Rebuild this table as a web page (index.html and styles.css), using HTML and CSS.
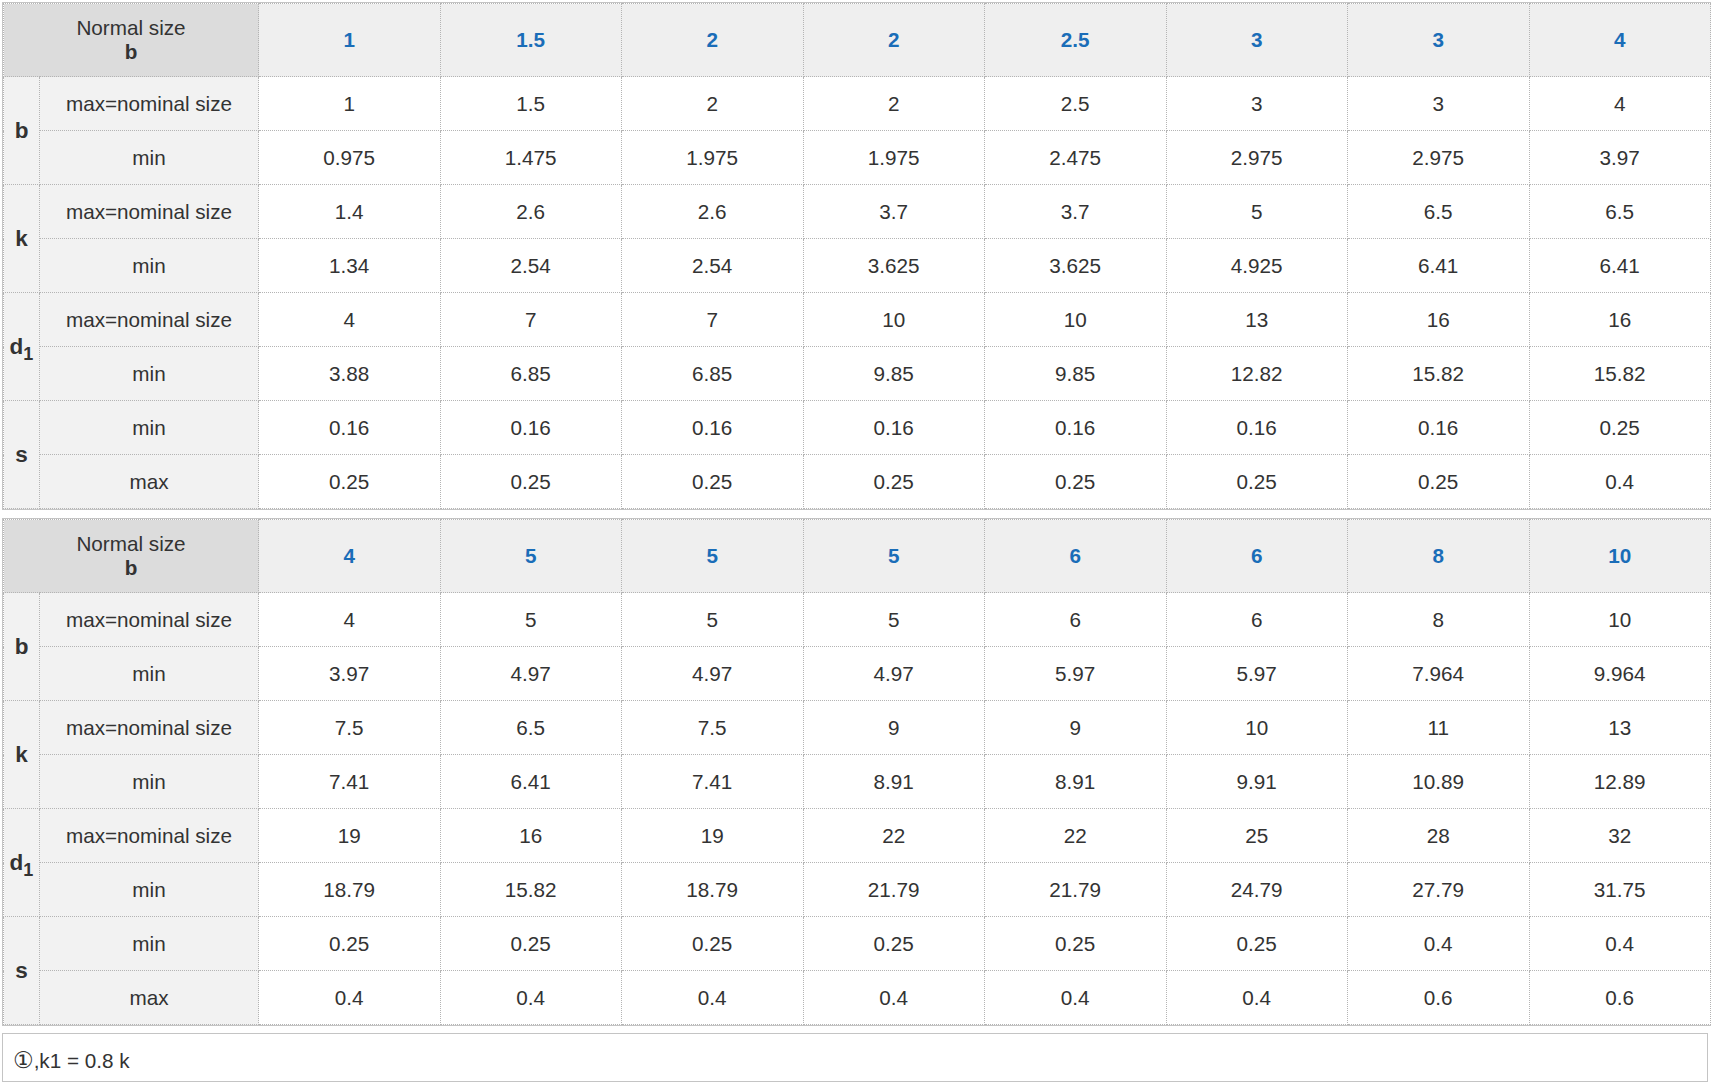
FILE: index.html
```html
<!DOCTYPE html>
<html>
<head>
<meta charset="utf-8">
<link rel="stylesheet" href="styles.css">
</head>
<body>
<div class="page">
  <div class="tbl-wrap">
    <table class="spec">
      <colgroup>
        <col class="c-sym"><col class="c-lbl">
        <col class="c-d"><col class="c-d"><col class="c-d"><col class="c-d"><col class="c-d"><col class="c-d"><col class="c-d"><col class="c-d">
      </colgroup>
      <tr class="hrow">
        <th colspan="2" class="corner">Normal size<br><b>b</b></th>
        <th>1</th><th>1.5</th><th>2</th><th>2</th><th>2.5</th><th>3</th><th>3</th><th>4</th>
      </tr>
      <tr><td rowspan="2" class="sym">b</td><td class="lbl">max=nominal size</td><td>1</td><td>1.5</td><td>2</td><td>2</td><td>2.5</td><td>3</td><td>3</td><td>4</td></tr>
      <tr><td class="lbl">min</td><td>0.975</td><td>1.475</td><td>1.975</td><td>1.975</td><td>2.475</td><td>2.975</td><td>2.975</td><td>3.97</td></tr>
      <tr><td rowspan="2" class="sym">k</td><td class="lbl">max=nominal size</td><td>1.4</td><td>2.6</td><td>2.6</td><td>3.7</td><td>3.7</td><td>5</td><td>6.5</td><td>6.5</td></tr>
      <tr><td class="lbl">min</td><td>1.34</td><td>2.54</td><td>2.54</td><td>3.625</td><td>3.625</td><td>4.925</td><td>6.41</td><td>6.41</td></tr>
      <tr><td rowspan="2" class="sym">d<sub>1</sub></td><td class="lbl">max=nominal size</td><td>4</td><td>7</td><td>7</td><td>10</td><td>10</td><td>13</td><td>16</td><td>16</td></tr>
      <tr><td class="lbl">min</td><td>3.88</td><td>6.85</td><td>6.85</td><td>9.85</td><td>9.85</td><td>12.82</td><td>15.82</td><td>15.82</td></tr>
      <tr><td rowspan="2" class="sym">s</td><td class="lbl">min</td><td>0.16</td><td>0.16</td><td>0.16</td><td>0.16</td><td>0.16</td><td>0.16</td><td>0.16</td><td>0.25</td></tr>
      <tr><td class="lbl">max</td><td>0.25</td><td>0.25</td><td>0.25</td><td>0.25</td><td>0.25</td><td>0.25</td><td>0.25</td><td>0.4</td></tr>
    </table>
  </div>

  <div class="tbl-wrap second">
    <table class="spec">
      <colgroup>
        <col class="c-sym"><col class="c-lbl">
        <col class="c-d"><col class="c-d"><col class="c-d"><col class="c-d"><col class="c-d"><col class="c-d"><col class="c-d"><col class="c-d">
      </colgroup>
      <tr class="hrow">
        <th colspan="2" class="corner">Normal size<br><b>b</b></th>
        <th>4</th><th>5</th><th>5</th><th>5</th><th>6</th><th>6</th><th>8</th><th>10</th>
      </tr>
      <tr><td rowspan="2" class="sym">b</td><td class="lbl">max=nominal size</td><td>4</td><td>5</td><td>5</td><td>5</td><td>6</td><td>6</td><td>8</td><td>10</td></tr>
      <tr><td class="lbl">min</td><td>3.97</td><td>4.97</td><td>4.97</td><td>4.97</td><td>5.97</td><td>5.97</td><td>7.964</td><td>9.964</td></tr>
      <tr><td rowspan="2" class="sym">k</td><td class="lbl">max=nominal size</td><td>7.5</td><td>6.5</td><td>7.5</td><td>9</td><td>9</td><td>10</td><td>11</td><td>13</td></tr>
      <tr><td class="lbl">min</td><td>7.41</td><td>6.41</td><td>7.41</td><td>8.91</td><td>8.91</td><td>9.91</td><td>10.89</td><td>12.89</td></tr>
      <tr><td rowspan="2" class="sym">d<sub>1</sub></td><td class="lbl">max=nominal size</td><td>19</td><td>16</td><td>19</td><td>22</td><td>22</td><td>25</td><td>28</td><td>32</td></tr>
      <tr><td class="lbl">min</td><td>18.79</td><td>15.82</td><td>18.79</td><td>21.79</td><td>21.79</td><td>24.79</td><td>27.79</td><td>31.75</td></tr>
      <tr><td rowspan="2" class="sym">s</td><td class="lbl">min</td><td>0.25</td><td>0.25</td><td>0.25</td><td>0.25</td><td>0.25</td><td>0.25</td><td>0.4</td><td>0.4</td></tr>
      <tr><td class="lbl">max</td><td>0.4</td><td>0.4</td><td>0.4</td><td>0.4</td><td>0.4</td><td>0.4</td><td>0.6</td><td>0.6</td></tr>
    </table>
  </div>

  <div class="note"><span class="circ">①</span>,k1 = 0.8 k</div>
</div>
</body>
</html>
```

FILE: styles.css
```css
html, body {
  margin: 0;
  padding: 0;
  background: #ffffff;
}

.page {
  padding: 2px 0 0 2px;
  font-family: "Liberation Sans", Arial, "DejaVu Sans", sans-serif;
  font-size: 20.7px;
  color: #333333;
}

.tbl-wrap {
  width: 1707px;
  border: 1px solid #c4c4c4;
}

.tbl-wrap.second {
  margin-top: 8px;
}

.spec {
  width: 1707px;
  table-layout: fixed;
  border-collapse: collapse;
}

.c-sym { width: 36px; }
.c-lbl { width: 219px; }
.c-d { width: 181.5px; }

.spec td,
.spec th {
  border: 1px dotted #b4b4b4;
  text-align: center;
  vertical-align: middle;
  padding: 0;
  height: 53px;
  line-height: 24px;
}

.spec tr.hrow th {
  height: 72px;
  background: #efefef;
  color: #1a6db8;
  font-weight: bold;
}

.spec tr.hrow th.corner {
  background: #dcdcdc;
  color: #333333;
  font-weight: normal;
}

.spec tr.hrow th.corner b {
  font-weight: bold;
}

.spec td {
  background: #ffffff;
}

.spec td.lbl,
.spec td.sym {
  background: #f2f2f2;
}

.spec td.sym {
  font-weight: bold;
  font-size: 22.5px;
}

.spec td.sym sub {
  font-size: 18px;
  vertical-align: -6px;
  line-height: 0;
}

.note {
  margin-top: 7px;
  width: 1682px;
  border: 1px solid #c4c4c4;
  padding: 14px 12px 8px 10px;
  height: 25px;
  line-height: 25px;
}

.note .circ {
  font-size: 23px;
}
```
